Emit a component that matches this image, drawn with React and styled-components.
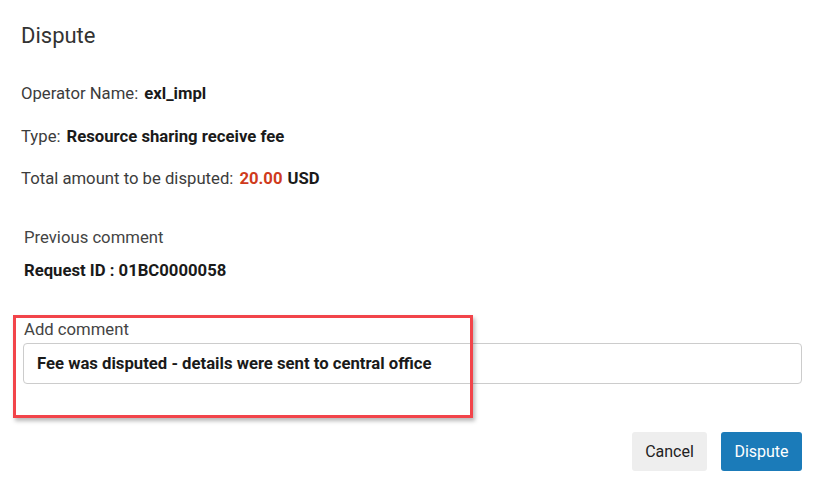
import React from "react";
import styled, { createGlobalStyle } from "styled-components";

const Global = createGlobalStyle`
  html, body { margin: 0; padding: 0; background: #fff; }
  body { font-family: Roboto, "Liberation Sans", Arial, sans-serif; color: #333; }
  * { box-sizing: border-box; }
`;

const Page = styled.div`
  width: 824px;
  height: 486px;
  padding: 24px 22px 0 21px;
  display: flex;
  flex-direction: column;
`;

const Title = styled.h2`
  margin: 0;
  font-size: 22px;
  line-height: 24px;
  font-weight: 400;
  color: #333;
`;

const Details = styled.div`
  margin-top: 36px;
  display: flex;
  flex-direction: column;
  gap: 22.5px;
`;

const Row = styled.div`
  font-size: 16.7px;
  line-height: 20px;
  color: #3c3c3c;
  display: flex;
  gap: 6px;
  white-space: nowrap;
`;

const Value = styled.span`
  font-weight: 700;
  color: ${(p) => (p.$accent ? "#cf3b1c" : "#1a1a1a")};
`;

const Amount = styled.span`
  display: flex;
  gap: 5px;
`;

const Previous = styled.div`
  margin-top: 39px;
  padding-left: 3px;
  display: flex;
  flex-direction: column;
  gap: 13px;
`;

const Muted = styled.div`
  font-size: 16.7px;
  line-height: 20px;
  color: #444;
`;

const Strong = styled.div`
  font-size: 16.7px;
  line-height: 20px;
  font-weight: 700;
  color: #1a1a1a;
`;

const CommentField = styled.div`
  position: relative;
  margin-top: 39px;
  margin-left: 2px;
  display: flex;
  flex-direction: column;
  gap: 3px;
`;

const FieldLabel = styled.label`
  padding-left: 1px;
  font-size: 16.7px;
  line-height: 20px;
  color: #444;
`;

const Input = styled.div`
  height: 41px;
  border: 1px solid #cccccc;
  border-radius: 4px;
  padding: 0 13px;
  display: flex;
  align-items: center;
  font-size: 16.7px;
  font-weight: 700;
  color: #1a1a1a;
`;

const Highlight = styled.div`
  position: absolute;
  left: -10px;
  top: -5px;
  width: 460px;
  height: 103px;
  border: 3px solid #f2444a;
  box-shadow: 2px 3px 4px rgba(0, 0, 0, 0.28);
  pointer-events: none;
`;

const Actions = styled.div`
  margin-top: 48px;
  display: flex;
  justify-content: flex-end;
  gap: 14px;
`;

const Button = styled.button`
  height: 39px;
  padding: 0 12px;
  border: none;
  border-radius: 3px;
  font-family: inherit;
  font-size: 16px;
  background: ${(p) => (p.$primary ? "#1b7bb9" : "#eeeeee")};
  color: ${(p) => (p.$primary ? "#ffffff" : "#222")};
  min-width: ${(p) => (p.$primary ? "81px" : "75px")};
`;

export default function App() {
  return (
    <>
      <Global />
      <Page>
        <Title>Dispute</Title>
        <Details>
          <Row>
            <span>Operator Name:</span>
            <Value>exl_impl</Value>
          </Row>
          <Row>
            <span>Type:</span>
            <Value>Resource sharing receive fee</Value>
          </Row>
          <Row>
            <span>Total amount to be disputed:</span>
            <Amount>
              <Value $accent>20.00</Value>
              <Value>USD</Value>
            </Amount>
          </Row>
        </Details>
        <Previous>
          <Muted>Previous comment</Muted>
          <Strong>Request ID : 01BC0000058</Strong>
        </Previous>
        <CommentField>
          <FieldLabel>Add comment</FieldLabel>
          <Input>Fee was disputed - details were sent to central office</Input>
          <Highlight />
        </CommentField>
        <Actions>
          <Button>Cancel</Button>
          <Button $primary>Dispute</Button>
        </Actions>
      </Page>
    </>
  );
}
